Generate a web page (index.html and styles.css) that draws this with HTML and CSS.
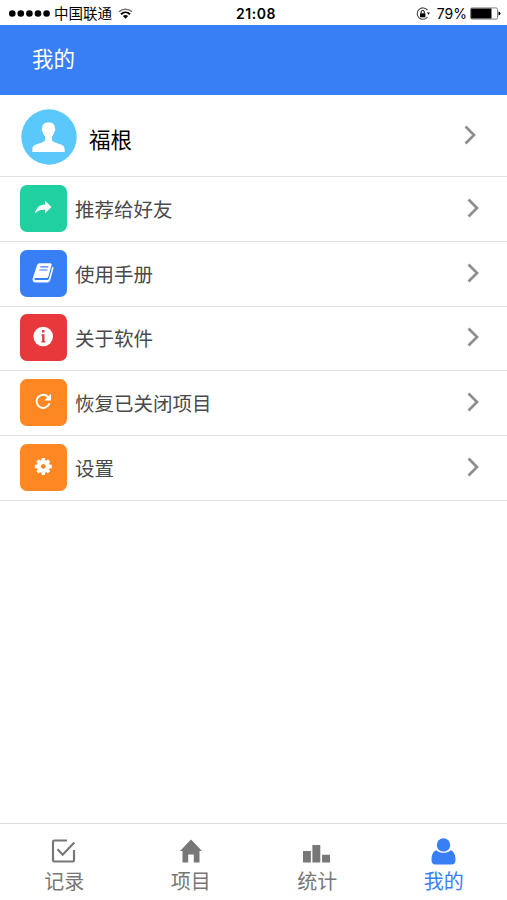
FILE: index.html
```html
<!DOCTYPE html>
<html lang="zh-CN">
<head>
  <meta charset="UTF-8" />
  <meta name="viewport" content="width=device-width, initial-scale=1.0"/>
  <title>我的</title>
  <link rel="stylesheet" href="styles.css">
</head>
<body>

  <div class="status-bar">
    <div class="status-left">
      <svg class="signal" width="42" height="8" viewBox="0 0 42 8">
        <circle cx="4.3" cy="3.500" r="3.3"/>
        <circle cx="12.8" cy="3.500" r="3.3"/>
        <circle cx="21.4" cy="3.500" r="3.3"/>
        <circle cx="30" cy="3.500" r="3.3"/>
        <circle cx="38.6" cy="3.500" r="3.3"/>
      </svg>
      <span class="carrier">中国联通</span>
      <svg class="wifi" width="15" height="11" viewBox="0 0 15 11">
        <path d="M1 3.800C4.700 .3 10.300 .3 14 3.800" fill="none" stroke="#777" stroke-width="1.500"/>
        <path d="M3 6.200C5.600 3.700 9.400 3.700 12 6.200" fill="none" stroke="#000" stroke-width="1.900"/>
        <path d="M4.900 8.100Q7.500 5.900 10.100 8.100L7.500 10.800z"/>
      </svg>
    </div>
    <span class="time">21:08</span>
    <div class="status-right">
      <svg width="14" height="14" viewBox="0 0 14 14">
        <path d="M11.500 3.200A5.700 5.700 0 1 0 11.500 10" fill="none" stroke="#444" stroke-width="1.100"/>
        <path d="M10.900 5.600h3.100l-1.500 2.200z"/>
        <path d="M4 6.300h5.400v4H4z"/>
        <path d="M5.100 6.500V5a1.600 1.600 0 0 1 3.200 0v1.500" fill="none" stroke="#000"/>
      </svg>
      <span class="percent">79%</span>
      <svg width="31" height="13" viewBox="0 0 31 13">
        <rect x=".5" y=".9" width="27" height="11.200" rx="1.500" fill="#fff" stroke="#777" stroke-width=".9"/>
        <rect x="1.100" y="1.500" width="20.400" height="10"/>
        <path d="M28.500 4.500q2 .5 2 2t-2 2z"/>
      </svg>
    </div>
  </div>

  <div class="header">我的</div>

  <div class="profile">
    <svg class="avatar" width="56" height="56" viewBox="0 0 56 56">
      <circle cx="28" cy="28" r="27.700" fill="#5ac8fa"/>
      <path d="M27.500 13.500c-4.400 0-6.500 1.900-6.300 5.400-.8.500-.4 3.600.7 4.400.4 2 1.200 3.300 2.200 4.200v3.700c-1.500 2.600-10.200 3.700-12 6.200-.8 1.100-.8 3.700-.8 5.600h32.400c0-1.900 0-4.500-.8-5.600-1.800-2.500-10.500-3.600-12-6.200v-3.700c1-.9 1.800-2.200 2.200-4.200 1.100-.8 1.500-3.900.7-4.400.2-3.500-1.900-5.400-6.300-5.400z" fill="#fff"/>
    </svg>
    <span class="profile-name">福根</span>
    <svg class="chevron" width="12" height="20" viewBox="0 0 12 20"><path d="M1.500 1.500L10 10l-8.500 8.500"/></svg>
  </div>

  <div class="menu">
    <div class="menu-item">
      <svg class="menu-icon green" viewBox="0 0 47 47">
        <path d="M25 15.800l6.500 6.200-6.500 6.200v-3.500c-4.400-.1-7.300.6-9.900 3.700.9-5.100 4-8.700 9.900-8.900z" fill="#fff"/>
      </svg>
      <span class="menu-text">推荐给好友</span>
      <svg class="chevron" width="12" height="20" viewBox="0 0 12 20"><path d="M1.500 1.500L10 10l-8.500 8.500"/></svg>
    </div>
    <div class="menu-item">
      <svg class="menu-icon blue" viewBox="0 0 47 47">
        <path d="M19.500 13.200h10.700q1.900 0 1.400 1.700l-3.200 11.500q-.5 1.600-2 1.600H15.500q-1.300 0-1.200 1.100t1.300 1h11.600q1.300 0 1.700-1.300l3.500-12.300q1.500.6 1 2.300L30.200 30q-.7 2.400-2.700 2.400H15.500c-2.600 0-3.500-2.500-2.400-5.200l3.900-12q.7-2 2.500-2z" fill="#fff"/>
        <path d="M20.300 16.800h8M19.400 20h8" fill="none" stroke="#387ef5" stroke-width="1.200"/>
      </svg>
      <span class="menu-text">使用手册</span>
      <svg class="chevron" width="12" height="20" viewBox="0 0 12 20"><path d="M1.500 1.500L10 10l-8.500 8.500"/></svg>
    </div>
    <div class="menu-item">
      <svg class="menu-icon red" viewBox="0 0 47 47">
        <circle cx="23.200" cy="22.500" r="9.800" fill="#fff"/>
        <path d="M22 16h2.500v2.500H22zM21.300 20.300h3.200v7h.9v1.200h-4.100v-1.200h.8v-5.800h-.8z" fill="#e8383b"/>
      </svg>
      <span class="menu-text">关于软件</span>
      <svg class="chevron" width="12" height="20" viewBox="0 0 12 20"><path d="M1.500 1.500L10 10l-8.500 8.500"/></svg>
    </div>
    <div class="menu-item">
      <svg class="menu-icon orange" viewBox="0 0 47 47">
        <path d="M28.500 18.400A6.600 6.600 0 1 0 29.500 24.200" fill="none" stroke="#fff" stroke-width="2"/>
        <path d="M31 14.700v6.800h-6.800z" fill="#fff"/>
      </svg>
      <span class="menu-text">恢复已关闭项目</span>
      <svg class="chevron" width="12" height="20" viewBox="0 0 12 20"><path d="M1.500 1.500L10 10l-8.500 8.500"/></svg>
    </div>
    <div class="menu-item">
      <svg class="menu-icon orange" viewBox="0 0 47 47">
        <g transform="translate(23.300 22.400)">
          <circle r="4.500" fill="none" stroke="#fff" stroke-width="4.200"/>
          <path d="M0-8.500V-5M0 8.500V5M-8.500 0H-5M8.500 0H5M-5.800-5.800l2.300 2.300M5.800 5.800L3.500 3.500M-5.800 5.800l2.300-2.300M5.800-5.800L3.500-3.500" fill="none" stroke="#fff" stroke-width="3.500"/>
        </g>
      </svg>
      <span class="menu-text">设置</span>
      <svg class="chevron" width="12" height="20" viewBox="0 0 12 20"><path d="M1.500 1.500L10 10l-8.500 8.500"/></svg>
    </div>
  </div>

  <div class="tab-bar">
    <div class="tab">
      <svg width="28" height="28" viewBox="0 0 28 28">
        <path d="M17 2.500H4.300Q3 2.500 3 3.800V22.200Q3 23.500 4.300 23.500H22.700Q24 23.500 24 22.200V12" fill="none" stroke="currentColor" stroke-width="2.200"/>
        <path d="M7.500 11.200l5.200 5.500L24.300 4.500" fill="none" stroke="currentColor" stroke-width="2.200"/>
      </svg>
      <span>记录</span>
    </div>
    <div class="tab">
      <svg width="28" height="28" viewBox="0 0 28 28">
        <path d="M14 1.600L25 13h-2.500v11.400h-5.700v-7.900h-5.600v7.900H5.500V13H3z" fill="currentColor"/>
      </svg>
      <span>项目</span>
    </div>
    <div class="tab">
      <svg width="28" height="28" viewBox="0 0 28 28">
        <path d="M0 13h7.900v11.400H0zM9.400 7h7.900v17.400H9.400zM19.100 16.700H27v7.700h-7.900z" fill="currentColor"/>
      </svg>
      <span>统计</span>
    </div>
    <div class="tab active">
      <svg width="28" height="28" viewBox="0 0 28 28">
        <circle cx="13.500" cy="6.900" r="6.700" fill="currentColor"/>
        <path d="M6.300 12.200c4.100 3.500 10.300 3.500 14.400 0 3.300 1.100 4.800 4.800 4.800 9.600 0 2.800-1.200 4.800-3.800 4.800H5.300c-2.600 0-3.800-2-3.800-4.800 0-4.800 1.500-8.500 4.800-9.600z" fill="currentColor"/>
      </svg>
      <span>我的</span>
    </div>
  </div>

</body>
</html>
```
FILE: styles.css
```css
* { box-sizing: border-box; }
body {
  font-family: "Liberation Sans", "Noto Sans CJK SC", sans-serif;
  margin: 0; height: 100vh; overflow: hidden;
  display: flex; flex-direction: column;
  background: #fff; color: #4a4a4a;
}
svg { display: block; flex-shrink: 0; }

.status-bar {
  height: 25px; padding: 2px 6px 0 8px; flex-shrink: 0;
  display: grid; grid-template-columns: 1fr auto 1fr; align-items: center;
  color: #000; line-height: 20px;
}
.status-left, .status-right { display: flex; align-items: center; }
.status-right { justify-content: flex-end; }
.carrier { font-size: 14.500px; margin: 0 6px 0 4px; }
.time { font-family: Inter, sans-serif; font-size: 14px; font-weight: 600; letter-spacing: 0.5px; margin-left: 3px; }
.percent { font-family: Inter, sans-serif; font-size: 14px; margin: 0 3px 0 7px; }

.header {
  height: 70px; padding-left: 32px; flex-shrink: 0;
  background: #387ef5; color: #fff;
  font-size: 21.500px; line-height: 71px;
}

.profile {
  height: 82px; padding: 0 31px 0 21px; flex-shrink: 0;
  display: flex; align-items: center;
  border-bottom: 1px solid #e2e2e2;
}
.avatar { margin-top: 2px; }
.profile-name { flex: 1; margin: 5px 0 0 12px; font-size: 21.500px; color: #000; }
.chevron { fill: none; stroke: #8e8e8e; stroke-width: 2.700; margin-bottom: 1px; }
.profile .chevron { margin-bottom: 1px; }

.menu-item {
  height: 64.750px; padding: 0 28px 1px 20px;
  display: flex; align-items: center;
  border-bottom: 1px solid #e2e2e2;
}
.menu-icon { width: 47px; height: 47px; border-radius: 7px; }
.menu-text { flex: 1; margin-left: 8px; font-size: 19.500px; }
.green { background: #20d0a1; }
.blue { background: #387ef5; }
.red { background: #e8383b; }
.orange { background: #fd8723; }

.tab-bar {
  height: 77px; margin-top: auto; padding: 14px 0 0 1px; flex-shrink: 0;
  display: flex; border-top: 1px solid #dcdcdc;
}
.tab {
  flex: 1; display: flex; flex-direction: column; align-items: center;
  color: #777; font-size: 20px; line-height: 32px;
}
.tab.active { color: #387ef5; }
```
